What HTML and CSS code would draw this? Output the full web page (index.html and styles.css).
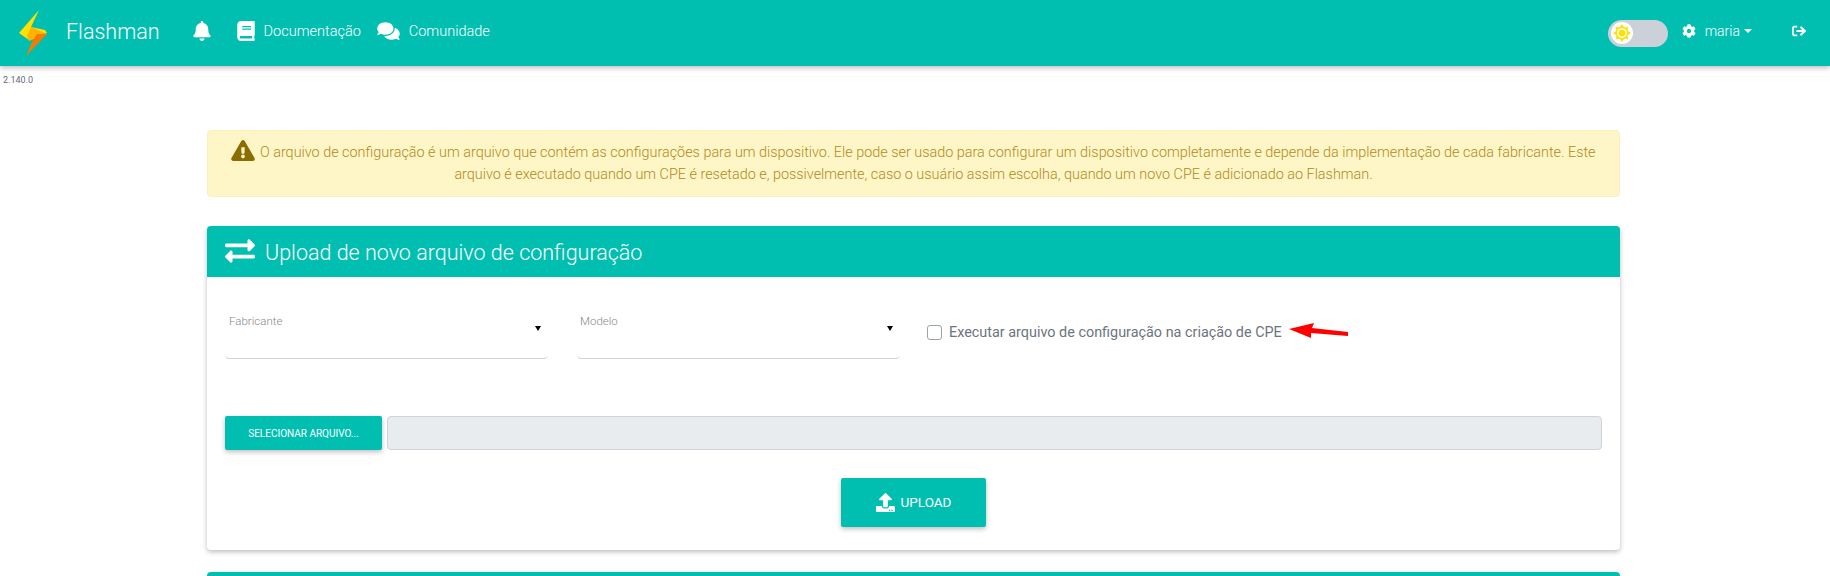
FILE: index.html
```html
<!DOCTYPE html>
<html lang="pt-BR">
<head>
    <meta charset="UTF-8">
    <meta name="viewport" content="width=device-width, initial-scale=1.0">
    <title>Flashman</title>
    <link rel="stylesheet" href="styles.css">
</head>
<body>
    <nav class="navbar">
        <svg class="logo" viewBox="0 0 30 46" width="30" height="46">
            <polygon points="21,0 1,23 11,30 19,23 29,23 27,20 13,17" fill="#ffe000"/>
            <polygon points="13,17 29,24 11,31 9,26" fill="#ffb300"/>
            <polygon points="19,24 29,24 8,46 15,30" fill="#f57c00"/>
        </svg>
        <a class="brand">Flashman</a>
        <svg class="icon bell" viewBox="0 0 448 512"><path d="M224 512c35.32 0 63.97-28.65 63.97-64H160.03c0 35.35 28.65 64 63.97 64zm215.39-149.71c-19.32-20.76-55.47-51.99-55.47-154.29 0-77.7-54.48-139.9-127.94-155.16V32c0-17.67-14.32-32-31.98-32s-31.98 14.33-31.98 32v20.84C118.56 68.1 64.08 130.3 64.08 208c0 102.3-36.15 133.53-55.47 154.29-6 6.45-8.66 14.16-8.61 21.71.11 16.4 12.98 32 32.1 32h383.8c19.12 0 32-15.6 32.1-32 .05-7.55-2.61-15.27-8.61-21.71z"/></svg>
        <a class="nav-link">
            <svg class="icon book" viewBox="0 0 448 512"><path d="M448 360V24c0-13.3-10.7-24-24-24H96C43 0 0 43 0 96v320c0 53 43 96 96 96h328c13.3 0 24-10.7 24-24v-16c0-7.5-3.5-14.3-8.9-18.7-4.2-15.4-4.2-59.3 0-74.7 5.4-4.3 8.9-11.1 8.9-18.6zM128 134c0-3.3 2.7-6 6-6h212c3.3 0 6 2.7 6 6v20c0 3.3-2.7 6-6 6H134c-3.3 0-6-2.7-6-6v-20zm0 64c0-3.3 2.7-6 6-6h212c3.3 0 6 2.7 6 6v20c0 3.3-2.7 6-6 6H134c-3.3 0-6-2.7-6-6v-20zm253.4 250H96c-17.7 0-32-14.3-32-32 0-17.6 14.4-32 32-32h285.4c-1.9 17.1-1.9 46.9 0 64z"/></svg>
            Documentação
        </a>
        <a class="nav-link">
            <svg class="icon comments" viewBox="0 0 576 512"><path d="M416 192c0-88.4-93.1-160-208-160S0 103.6 0 192c0 34.3 14.1 65.9 38 92-13.4 30.2-35.5 54.2-35.8 54.5-2.2 2.3-2.8 5.7-1.5 8.7S4.8 352 8 352c36.6 0 66.9-12.3 88.7-25 32.2 15.7 70.3 25 111.3 25 114.9 0 208-71.6 208-160zm122 220c23.9-26 38-57.7 38-92 0-66.9-53.5-124.2-129.3-148.1.9 6.6 1.3 13.3 1.3 20.1 0 105.9-107.7 192-240 192-10.8 0-21.3-.8-31.7-1.9C207.8 439.6 281.8 480 368 480c41 0 79.1-9.2 111.3-25 21.8 12.7 52.1 25 88.7 25 3.2 0 6.1-1.9 7.3-4.8 1.3-2.9.7-6.3-1.5-8.7-.3-.3-22.4-24.2-35.8-54.5z"/></svg>
            Comunidade
        </a>
        <div class="nav-right">
            <div class="theme-switch">
                <span class="theme-knob">
                    <svg viewBox="0 0 24 24" width="18" height="18">
                        <g fill="#ffe000">
                            <circle cx="12" cy="12" r="7.5" fill="none" stroke="#ffe000" stroke-width="2"/>
                            <circle cx="12" cy="12" r="4.5"/>
                            <polygon points="12,0 14.5,4 9.5,4"/>
                            <polygon points="12,24 14.5,20 9.5,20"/>
                            <polygon points="0,12 4,9.5 4,14.5"/>
                            <polygon points="24,12 20,9.5 20,14.5"/>
                            <polygon points="3.5,3.5 8,4.6 4.6,8"/>
                            <polygon points="20.5,3.5 19.4,8 16,4.6"/>
                            <polygon points="3.5,20.5 4.6,16 8,19.4"/>
                            <polygon points="20.5,20.5 16,19.4 19.4,16"/>
                        </g>
                    </svg>
                </span>
            </div>
            <svg class="icon cog" viewBox="0 0 512 512"><path d="M487.4 315.7l-42.6-24.6c4.3-23.2 4.3-47 0-70.2l42.6-24.6c4.9-2.8 7.1-8.6 5.5-14-11.1-35.6-30-67.8-54.7-94.6-3.8-4.1-10-5.1-14.8-2.3L380.8 110c-17.9-15.4-38.5-27.3-60.8-35.1V25.8c0-5.6-3.9-10.5-9.4-11.7-36.7-8.2-74.3-7.8-109.2 0-5.5 1.2-9.4 6.1-9.4 11.7V75c-22.2 7.9-42.8 19.8-60.8 35.1L88.7 85.5c-4.9-2.8-11-1.9-14.8 2.3-24.7 26.7-43.6 58.9-54.7 94.6-1.7 5.4.6 11.2 5.5 14L67.3 221c-4.3 23.2-4.3 47 0 70.2l-42.6 24.6c-4.9 2.8-7.1 8.6-5.5 14 11.1 35.6 30 67.8 54.7 94.6 3.8 4.1 10 5.1 14.8 2.3l42.6-24.6c17.9 15.4 38.5 27.3 60.8 35.1v49.2c0 5.6 3.9 10.5 9.4 11.7 36.7 8.2 74.3 7.8 109.2 0 5.5-1.2 9.4-6.1 9.4-11.7v-49.2c22.2-7.9 42.8-19.8 60.8-35.1l42.6 24.6c4.9 2.8 11 1.9 14.8-2.3 24.7-26.7 43.6-58.9 54.7-94.6 1.5-5.5-.7-11.3-5.6-14.1zM256 336c-44.1 0-80-35.9-80-80s35.9-80 80-80 80 35.9 80 80-35.9 80-80 80z"/></svg>
            <a class="user">maria<span class="caret"></span></a>
            <svg class="icon signout" viewBox="0 0 512 512"><path d="M180 448H96c-53 0-96-43-96-96V160c0-53 43-96 96-96h84c6.6 0 12 5.4 12 12v40c0 6.6-5.4 12-12 12H96c-17.7 0-32 14.3-32 32v192c0 17.7 14.3 32 32 32h84c6.6 0 12 5.4 12 12v40c0 6.6-5.4 12-12 12zm117.9-303.1l77.6 71.1H184c-13.3 0-24 10.7-24 24v32c0 13.3 10.7 24 24 24h191.5l-77.6 71.1c-10.3 9.4-10.7 25.6-.8 35.5l21.9 21.9c9.3 9.3 24.5 9.4 33.9.1l152-150.8c9.4-9.3 9.4-24.4 0-33.7l-152-150.8c-9.4-9.3-24.6-9.3-33.9.1l-21.9 21.9c-9.9 9.9-9.5 26.1.8 35.5z"/></svg>
        </div>
    </nav>

    <div class="version">2.140.0</div>

    <main class="content">
        <div class="alert">
            <svg class="alert-icon" viewBox="0 0 576 512"><path d="M569.517 440.013C587.975 472.007 564.806 512 527.94 512H48.054c-36.937 0-59.999-40.055-41.577-71.987L246.423 24.035c18.467-32.009 64.72-31.951 83.154 0l239.94 416.028zM288 354c-25.405 0-46 20.595-46 46s20.595 46 46 46 46-20.595 46-46-20.595-46-46-46zm-43.673-165.346l7.418 136c.347 6.364 5.609 11.346 11.982 11.346h48.546c6.373 0 11.635-4.982 11.982-11.346l7.418-136c.375-6.874-5.098-12.654-11.982-12.654h-63.383c-6.884 0-12.356 5.78-11.981 12.654z"/></svg>
            O arquivo de configuração é um arquivo que contém as configurações para um dispositivo. Ele pode ser usado para configurar um dispositivo completamente e depende da implementação de cada fabricante. Este arquivo é executado quando um CPE é resetado e, possivelmente, caso o usuário assim escolha, quando um novo CPE é adicionado ao Flashman.
        </div>

        <section class="card">
            <header class="card-header">
                <svg class="exchange" viewBox="0 0 512 512"><path d="M0 168v-16c0-13.255 10.745-24 24-24h360V80c0-21.367 25.899-32.042 40.971-16.971l80 80c9.372 9.373 9.372 24.569 0 33.941l-80 80C409.956 271.982 384 261.456 384 240v-48H24c-13.255 0-24-10.745-24-24zm488 152H128v-48c0-21.314-25.862-32.08-40.971-16.971l-80 80c-9.372 9.373-9.372 24.569 0 33.941l80 80C102.057 463.997 128 453.437 128 432v-48h360c13.255 0 24-10.745 24-24v-16c0-13.255-10.745-24-24-24z"/></svg>
                <h2>Upload de novo arquivo de configuração</h2>
            </header>
            <div class="card-body">
                <div class="form-row">
                    <div class="select-field">
                        <label>Fabricante</label>
                        <span class="select-arrow"></span>
                    </div>
                    <div class="select-field">
                        <label>Modelo</label>
                        <span class="select-arrow"></span>
                    </div>
                    <div class="check-field">
                        <span class="checkbox"></span>
                        <span class="check-label">Executar arquivo de configuração na criação de CPE</span>
                        <svg class="red-arrow" viewBox="0 0 60 18" width="60" height="18">
                            <polygon points="0,6 25,0 23,5 59,9 59,13 22,10 22,15" fill="#ff0000"/>
                        </svg>
                    </div>
                </div>
                <div class="file-row">
                    <button class="file-btn">SELECIONAR ARQUIVO...</button>
                    <div class="file-input"></div>
                </div>
                <div class="upload-row">
                    <button class="upload-btn">
                        <svg class="upload-icon" viewBox="0 0 512 512"><path d="M296 384h-80c-13.3 0-24-10.7-24-24V192h-87.7c-17.8 0-26.7-21.5-14.1-34.1L242.3 5.7c7.5-7.5 19.8-7.5 27.3 0l152.2 152.2c12.6 12.6 3.7 34.1-14.1 34.1H320v168c0 13.3-10.7 24-24 24zm216-8v112c0 13.3-10.7 24-24 24H24c-13.3 0-24-10.7-24-24V376c0-13.3 10.7-24 24-24h136v8c0 30.9 25.1 56 56 56h80c30.9 0 56-25.1 56-56v-8h136c13.3 0 24 10.7 24 24zm-124 88c0-11-9-20-20-20s-20 9-20 20 9 20 20 20 20-9 20-20zm64 0c0-11-9-20-20-20s-20 9-20 20 9 20 20 20 20-9 20-20z"/></svg>
                        UPLOAD
                    </button>
                </div>
            </div>
        </section>

        <section class="card card-next">
            <header class="card-header"></header>
        </section>
    </main>
</body>
</html>
```

FILE: styles.css
```css
html, body {
    margin: 0;
    height: 576px;
    overflow: hidden; /* second card is cut by the window */
}

body {
    font-family: Roboto, "Liberation Sans", sans-serif;
    font-weight: 300;
    background-color: #fff;
    color: #6c757d;
}

.navbar {
    display: flex;
    align-items: center;
    height: 66px;
    padding: 0 24px 0 18px;
    box-sizing: border-box;
    background-color: #00bfb0;
    color: #fff;
    box-shadow: 0 2px 5px rgba(0, 0, 0, 0.26);
}

.icon {
    fill: #fff;
    display: block;
}

.logo {
    margin-right: 18px;
}

.brand {
    font-size: 21.5px;
    margin: -4px 33px 0 0;
}

.bell {
    width: 18px;
    height: 20px;
    margin: -4px 26px 0 0;
}

.nav-link {
    display: flex;
    align-items: center;
    font-size: 14.5px;
    margin: -4px 16px 0 0;
}

.book {
    width: 18px;
    height: 20px;
    margin-right: 9px;
}

.comments {
    width: 23px;
    height: 20px;
    margin-right: 9px;
}

.nav-right {
    display: flex;
    align-items: center;
    margin-left: auto;
}

.theme-switch {
    display: flex;
    align-items: center;
    width: 60px;
    height: 27px;
    padding: 0 3px;
    box-sizing: border-box;
    border-radius: 14px;
    background-color: #ccd1d9;
    margin-right: 14px;
}

.theme-knob {
    display: flex;
    align-items: center;
    justify-content: center;
    width: 22px;
    height: 22px;
    border-radius: 50%;
    background-color: #fff;
}

.cog {
    width: 14px;
    height: 14px;
    margin: -4px 9px 0 0;
}

.user {
    display: flex;
    align-items: center;
    font-size: 14px;
    margin: -4px 40px 0 0;
}

.caret {
    width: 0;
    height: 0;
    margin-left: 4px;
    border-top: 4px solid #fff;
    border-left: 4px solid transparent;
    border-right: 4px solid transparent;
}

.signout {
    width: 14px;
    height: 14px;
    margin-top: -4px;
}

.version {
    font-size: 9px;
    line-height: 12px;
    padding: 8px 0 0 3px;
    font-weight: 400;
    color: #5f6b80;
}

.content {
    width: 1413px;
    margin: 44px 0 0 207px;
}

.alert {
    padding: 9px 20px;
    box-sizing: border-box;
    height: 67px;
    border: 1px solid #ffeeba;
    border-radius: 4px;
    background-color: #fff6c8;
    color: #b08a18;
    font-size: 14.4px;
    line-height: 22px;
    text-align: center;
}

.alert-icon {
    width: 24px;
    height: 21px;
    fill: #8a6d00;
    vertical-align: -4px;
    margin-right: 1px;
}

.card {
    margin-top: 29px;
    border-radius: 4px;
    background-color: #fff;
    box-shadow: 0 2px 5px rgba(0, 0, 0, 0.26);
}

.card-next {
    margin-top: 22px;
}

.card-header {
    display: flex;
    align-items: center;
    height: 51px;
    padding: 0 18px;
    border-radius: 4px 4px 0 0;
    background-color: #00bfb0;
    color: #fff;
}

.exchange {
    width: 30px;
    height: 30px;
    fill: #fff;
    margin: -2px 10px 0 0;
}

.card-header h2 {
    margin: 1px 0 0;
    font-size: 21.5px;
    font-weight: 300;
}

.card-body {
    padding: 0 18px 23px;
    height: 273px;
    box-sizing: border-box;
}

.form-row {
    display: flex;
    align-items: flex-start;
    height: 139px;
}

.select-field {
    position: relative;
    width: 323px;
    height: 82px;
    margin-right: 29px;
    border-bottom: 1px solid #ced4da;
    border-radius: 0 0 4px 4px;
    box-sizing: border-box;
}

.select-field label {
    position: absolute;
    left: 4px;
    top: 37px;
    font-size: 11.5px;
    font-weight: 300;
    color: #888;
}

.select-field + .select-field label {
    left: 3px;
}

.select-arrow {
    position: absolute;
    right: 7px;
    top: 49px;
    width: 0;
    height: 0;
    border-top: 5px solid #000;
    border-left: 3px solid transparent;
    border-right: 3px solid transparent;
}

.check-field {
    display: flex;
    align-items: center;
    height: 28px;
    margin-top: 41px;
    margin-left: -2px;
}

.checkbox {
    width: 13px;
    height: 13px;
    border: 1px solid #9aa3ad;
    border-radius: 3px;
    margin-right: 7px;
}

.check-label {
    font-size: 14.4px;
    font-weight: 400;
    color: #6c757d;
}

.red-arrow {
    margin-left: 7px;
    margin-top: -1px;
}

.file-row {
    display: flex;
    gap: 5px;
    height: 34px;
}

.file-btn {
    width: 157px;
    border: none;
    border-radius: 2px;
    background-color: #00bfb0;
    color: #fff;
    font-family: inherit;
    font-size: 10px;
    font-weight: 400;
    box-shadow: 0 2px 5px rgba(0, 0, 0, 0.26);
}

.file-input {
    flex: 1;
    border: 1px solid #ced4da;
    border-radius: 4px;
    background-color: #e9ecef;
}

.upload-row {
    display: flex;
    justify-content: center;
    margin-top: 28px;
}

.upload-btn {
    display: flex;
    align-items: center;
    justify-content: center;
    width: 145px;
    height: 49px;
    padding-bottom: 2px;
    border: none;
    border-radius: 2px;
    background-color: #00bfb0;
    color: #fff;
    font-family: inherit;
    font-size: 13.5px;
    font-weight: 400;
    box-shadow: 0 2px 5px rgba(0, 0, 0, 0.26);
}

.upload-icon {
    width: 19px;
    height: 19px;
    fill: #fff;
    margin-right: 6px;
}
```
